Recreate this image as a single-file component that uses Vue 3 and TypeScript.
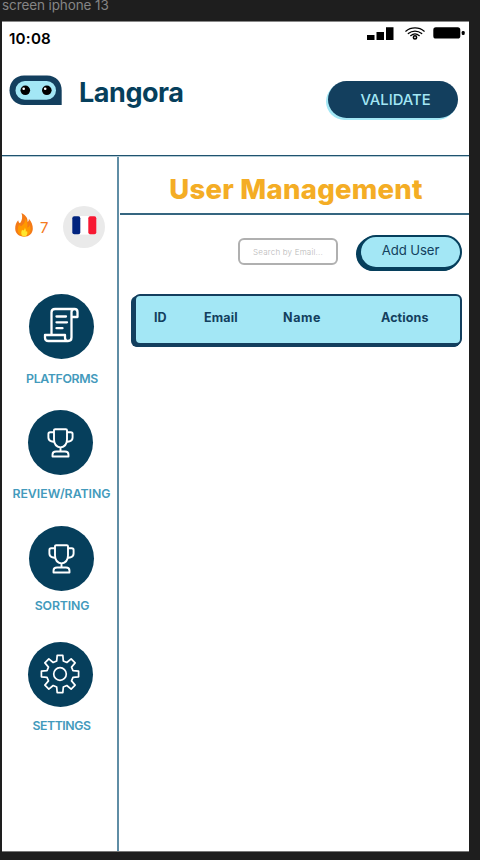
<script setup lang="ts">
type IconName = 'scroll' | 'trophy' | 'gear'
interface NavItem { key: string; label: string; icon: IconName }

const navItems: NavItem[] = [
  { key: 'platforms', label: 'PLATFORMS', icon: 'scroll' },
  { key: 'review', label: 'REVIEW/RATING', icon: 'trophy' },
  { key: 'sorting', label: 'SORTING', icon: 'trophy' },
  { key: 'settings', label: 'SETTINGS', icon: 'gear' },
]
const columns: string[] = ['ID', 'Email', 'Name', 'Actions']

// Outline of an eight-toothed cog centred on the origin.
function cogPath(teeth: number, inner: number, outer: number): string {
  const points: string[] = []
  for (let i = 0; i < teeth; i++) {
    const base = (i / teeth) * Math.PI * 2 - Math.PI / 2
    const corners: [number, number][] = [[-0.25, inner], [-0.15, outer], [0.15, outer], [0.25, inner]]
    for (const [offset, radius] of corners) {
      const a = base + offset
      points.push(`${(Math.cos(a) * radius).toFixed(2)} ${(Math.sin(a) * radius).toFixed(2)}`)
    }
  }
  return `M${points.join('L')}Z`
}
const cog = cogPath(8, 13.4, 18.8)
</script>

<template>
  <div class="canvas">
    <div class="frame-name">screen iphone 13</div>
    <main class="screen">
      <div class="status">
        <span class="time">10:08</span>
        <div class="indicators">
          <svg class="signal" width="27" height="13" viewBox="0 0 27 13"><path d="M0 8h7.500v5H0zM9.500 5h7.500v8H9.500zM19 .3h7.500V13H19z" /></svg>
          <svg class="wifi" width="20" height="13" viewBox="0 0 20 13" fill="none" stroke="#000" stroke-width="1.25" stroke-linecap="round">
            <path d="M.8 4.2C6-.2 14-.2 19.2 4.2M3.3 6.500c4-3.300 9.400-3.300 13.400 0M5.700 8.700c2.700-2.200 5.900-2.200 8.600 0" />
            <circle cx="10" cy="10.400" r="1.600" stroke-width="1.600" />
          </svg>
          <svg class="battery" width="33" height="12" viewBox="0 0 33 12"><rect x=".3" y=".3" width="27" height="11.200" rx="2.600" /><rect x="28.700" y="4" width="3" height="4" rx="1.300" /></svg>
        </div>
      </div>

      <header class="brand-bar">
        <svg class="logo" width="54" height="31" viewBox="0 0 54 31">
          <path d="M15 .5h23C47 .5 52.700 7 52.700 15.500V30H15C6.500 30 .5 23.500 .5 15.300S6.500 .5 15 .5Z" fill="#133f5e" />
          <rect x="6.500" y="6" width="40.500" height="18.800" rx="9.400" fill="#a3e7f5" />
          <circle cx="16.300" cy="15.300" r="4.800" /><circle cx="37.800" cy="15.300" r="4.800" />
          <circle cx="14.700" cy="13.800" r="1.300" fill="#fff" /><circle cx="36.200" cy="13.800" r="1.300" fill="#fff" />
        </svg>
        <span class="brand">Langora</span>
        <button class="validate"><span>VALIDATE</span></button>
      </header>

      <div class="body">
        <aside class="sidebar">
          <div class="profile">
            <svg class="flame" width="18" height="24" viewBox="0 0 18 24">
              <path d="M6.500 0c5 2.500 6.500 6 6.100 9 1.200-.8 1.400-2 1.200-3.200 2.700 2.700 4.200 6.700 4 10.200-.2 4.500-3.700 7.700-8.700 7.700S.3 20.500 .2 15.800c-.1-3.500 1-6.500 3-8.600 .2 1.700 .8 2.500 1.800 3C7.200 7.500 7.800 3.500 6.500 0Z" fill="#f47a17" />
              <path d="M9.500 5c1.600 4-.8 6-3.300 8.200-1-.3-1.700-.9-2-1.700-2 3.500-2 7.500 .5 10 2.400 2.200 6.600 2.200 9-.2 2.700-2.800 2-6.800 1-9.300-.4 1.500-1.200 2.300-2.500 2.800C13 11 12.200 7.500 9.500 5Z" fill="#ff9800" />
              <path d="M9.700 14.500c.3 1.500-.3 2-1.200 3.100-.6 0-1.100-.3-1.400-.8-1 1.700-1.300 4.500 .2 6 1 .9 2.900 .9 3.900 0 1.300-1.200 1.400-3.300 .8-4.900-.3 .5-.7 .7-1.200 .8 .2-1.500-.2-3.100-1.100-4.200Z" fill="#ffe62e" />
            </svg>
            <span class="streak">7</span>
            <div class="language">
              <svg width="25" height="19" viewBox="0 0 25 19"><rect x="8" width="9" height="18.600" fill="#fff" /><rect x=".3" y=".3" width="8" height="18" rx="2" fill="#00237e" /><rect x="16.300" y=".3" width="8" height="18" rx="2" fill="#f71832" /></svg>
            </div>
          </div>

          <nav>
            <a v-for="item in navItems" :key="item.key" class="nav-item" :class="item.key">
              <span class="disc">
                <svg v-if="item.icon === 'scroll'" class="scroll" width="36" height="36" viewBox="0 0 36 36" fill="none" stroke="#fff" stroke-width="2.300" stroke-linejoin="round" stroke-linecap="round">
                  <path d="M8.500 27.500V5.500Q8.500 2 12 2H31.500Q34.500 2 34.500 5V10H28.500V30.500Q28.500 34 25 34H5.500Q2 34 2 31V28H22V31Q22.200 33.500 24.500 34M31.500 2Q28.500 2 28.500 5V10" />
                  <path d="M13.500 9.500h9.500M13.500 15.300h10.500M13.500 21.200h6" />
                </svg>
                <svg v-else-if="item.icon === 'trophy'" width="27" height="30" viewBox="0 0 27 30" fill="none" stroke="#fff" stroke-width="1.900" stroke-linejoin="round">
                  <path d="M7 2.300Q7 1.200 8.200 1.200H18.800Q20 1.200 20 2.300V11.200C20 16 17.500 18.800 13.500 19.500C9.500 18.800 7 16 7 11.200ZM13.500 19.500V23.500M7 4.200H3.200Q1.400 4.200 1.400 6V9.500Q1.400 12.500 4.300 13.300L7.300 14M20 4.200H23.800Q25.600 4.200 25.600 6V9.500Q25.600 12.500 22.700 13.300L19.700 14M5.500 28.500V26.700Q5.500 23.500 9 23.500H18Q21.500 23.500 21.500 26.700V28.500Z" />
                </svg>
                <svg v-else class="gear" width="42" height="42" viewBox="-21 -21 42 42" fill="none" stroke="#fff" stroke-width="1.700" stroke-linejoin="round"><path :d="cog" /><circle r="6.300" /></svg>
              </span>
              <span class="label">{{ item.label }}</span>
            </a>
          </nav>
        </aside>

        <section class="content">
          <h1><span>User Management</span></h1>
          <div class="tools">
            <input class="search" type="text" placeholder="Search by Email..." aria-label="Search by Email" />
            <button class="add"><span>Add User</span></button>
          </div>
          <div class="table-head">
            <span v-for="column in columns" :key="column" :class="'col-' + column.toLowerCase()">{{ column }}</span>
          </div>
        </section>
      </div>
    </main>
  </div>
</template>

<style>
body { background: #1e1e1e; overflow: hidden; }
</style>

<style scoped>
* { box-sizing: border-box; }
.canvas { width: 480px; height: 860px; padding-left: 2px; overflow: hidden; background: #1e1e1e; font-family: Inter, "Open Sans", sans-serif; color: #133f5e; }
.frame-name { height: 21px; color: #858585; font-size: 13.500px; line-height: 10px; letter-spacing: -.1px; white-space: nowrap; }
.screen { width: 467px; height: 831px; background: #fff; border-bottom: 1px solid #777; border-top: 1px solid #888; }
.status { display: flex; justify-content: space-between; height: 42px; padding: 5px 3px 0 7px; }
.time { color: #000; font-size: 15.200px; line-height: 24px; font-weight: 600; letter-spacing: .2px; }
.indicators { display: flex; align-items: flex-start; }
.signal { margin-right: 11px; }
.wifi { margin-right: 8px; }
.brand-bar { display: flex; align-items: flex-start; height: 92px; padding: 12px 11px 0 7px; border-bottom: 1px solid #1f536f; box-shadow: 0 1px 0 #b4cbd5; }
.logo { margin-top: -1px; }
.brand { margin: 0 0 0 16px; font-size: 27px; line-height: 33px; font-weight: 700; color: #063f5c; letter-spacing: -.45px; }
button { border: 0; padding: 0; font-family: inherit; cursor: pointer; }
.validate { width: 130px; height: 37px; margin: 5px 0 0 auto; padding-left: 5px; border-radius: 19px; background: #133f5e; color: #a3e7f5; font-size: 14.800px; font-weight: 500; box-shadow: -1px 1px 0 #a3e7f5, -2px 2px 0 #a3e7f5; }
.body { display: flex; height: 695px; padding-top: 1px; }
.sidebar { width: 117px; border-right: 2px solid #5f8da5; }
.profile { display: flex; align-items: center; height: 42px; margin: 49px 0 46px 13px; }
.flame { flex: none; margin-top: -4px; }
.streak { width: 30px; padding-left: 7px; font-size: 15px; color: #f47a20; font-weight: 400; }
.language { display: grid; place-items: center; width: 42px; height: 42px; border-radius: 50%; background: #eaeaea; }
.language svg { margin-top: -3px; }
.nav-item { display: flex; flex-direction: column; align-items: center; height: 116px; padding-left: 2px; }
.platforms, .sorting { padding-left: 3px; }
.disc { display: grid; place-items: center; width: 65px; height: 65px; border-radius: 50%; background: #063f5c; }
.scroll { margin-top: -3px; }
.gear { margin: -1px 2px 0 0; }
.label { margin: 11px 0 0 2px; font-size: 12.300px; line-height: 18px; font-weight: 600; color: #439abc; white-space: nowrap; }
.platforms .label { letter-spacing: -.35px; }
.review .label { margin-top: 10px; }
.sorting .label { margin-top: 6px; letter-spacing: -.15px; }
.settings .label { margin-top: 10px; letter-spacing: -.45px; }
.content { flex: 1; padding-left: 1px; }
h1 { display: flex; justify-content: center; align-items: center; height: 58px; margin: 0; padding: 7px 0 0 3px; border-bottom: 2px solid #356680; color: #f4ad25; font-size: 27.500px; line-height: 36px; font-weight: 800; letter-spacing: .25px; white-space: nowrap; }
.tools { display: flex; justify-content: flex-end; align-items: flex-start; padding: 20px 7px 0 0; }
.search { width: 100px; height: 27px; margin: 3px 21px 0 0; padding: 0 0 0 13px; border: 2px solid #b0b0b0; border-radius: 6px; font-family: Inter, sans-serif; font-size: 8px; font-weight: 300; letter-spacing: .2px; outline: 0; }
.search::placeholder { color: #b8b8b8; opacity: 1; }
.add { width: 103px; height: 34px; border: 2px solid #063f5c; border-radius: 17px; background: #a3e7f5; color: #133f5e; font-size: 13.200px; font-weight: 400; letter-spacing: -.1px; box-shadow: -1px 1px 0 #063f5c, -2px 2px 0 #063f5c, -3px 2px 0 #063f5c; }
.add span { display: block; margin-top: -4px; }
.table-head { display: grid; grid-template-columns: 50px 79px 98px 60px; height: 51px; margin: 25px 7px 0 14px; padding: 13px 0 0 18px; border: 2px solid #133f5e; border-radius: 6px; background: #a3e7f5; color: #133f5e; box-shadow: -1px 1px 0 #133f5e, -2px 2px 0 #133f5e, -3px 2px 0 #133f5e; font-size: 12.500px; line-height: 18px; font-weight: 700; white-space: nowrap; }
.col-email { letter-spacing: .15px; }
.col-actions { letter-spacing: .1px; }
.col-name { letter-spacing: .6px; }
</style>
